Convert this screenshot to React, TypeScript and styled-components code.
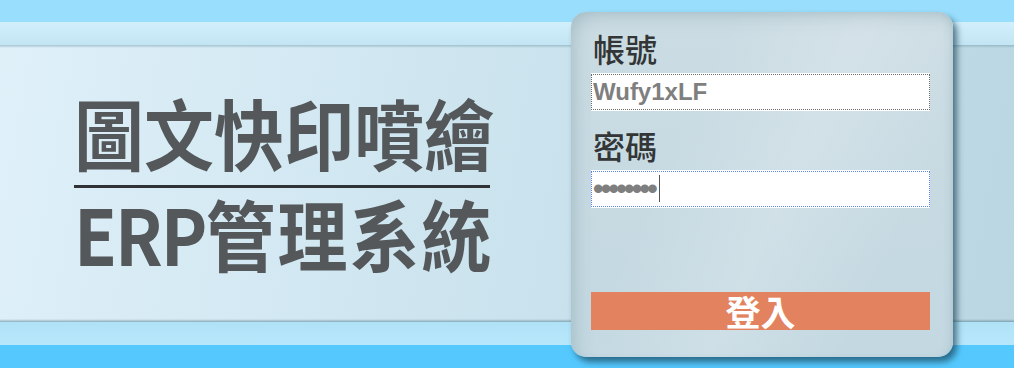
import styled, { createGlobalStyle } from 'styled-components';

const GlobalStyle = createGlobalStyle`
  html, body {
    margin: 0;
    padding: 0;
  }
  body {
    font-family: "Noto Sans CJK TC", "Noto Sans", sans-serif;
  }
`;

// ページ全体。背景の帯はグラデーションで描く
const Page = styled.div`
  width: 1014px;
  height: 368px;
  overflow: hidden;
  display: flex;
  align-items: flex-start;
  padding-top: 12px;
  box-sizing: border-box;
  background:
    linear-gradient(to bottom, rgba(120, 160, 175, 0.55), rgba(120, 160, 175, 0) 3px) 0 45px / 100% 6px no-repeat,
    linear-gradient(to top, rgba(90, 130, 145, 0.6), rgba(90, 130, 145, 0) 3px) 0 316px / 100% 6px no-repeat,
    linear-gradient(100deg, #dff0f9 0%, #cfe6f0 40%, #b9d6e2 100%) 0 45px / 100% 277px no-repeat,
    linear-gradient(
      to bottom,
      #99defc 0,
      #99defc 22px,
      #d2effc 22px,
      #c3e5f3 45px,
      #b0e2f7 322px,
      #b7e7fb 345px,
      #55c9fe 345px,
      #55c9fe 368px
    );
`;

// 左側の大きいタイトル
const TitleBlock = styled.div`
  margin-left: 74px;
  margin-top: 76px;
  width: 416px;
  display: flex;
  flex-direction: column;
  align-items: stretch;
`;

// タイトルは縦にやや伸ばしてある
const TitleLine = styled.div`
  font-family: "Noto Sans CJK TC", sans-serif;
  font-weight: 700;
  font-size: 70px;
  line-height: 88px;
  color: #54585a;
  white-space: nowrap;
  transform: scaleY(1.1);
`;

// 「ERP」だけ少し詰める
const Latin = styled.span`
  letter-spacing: -2px;
`;

const Wide = styled.span`
  letter-spacing: 2px;
`;

const Divider = styled.div`
  height: 3px;
  background: #2f3335;
  margin: 9px 0 1px;
`;

// ログインカード
const Card = styled.form`
  margin-left: 81px;
  width: 382px;
  height: 345px;
  box-sizing: border-box;
  border-radius: 15px;
  padding: 14px 23px 27px 20px;
  display: flex;
  flex-direction: column;
  background:
    linear-gradient(115deg, rgba(255, 255, 255, 0) 30%, rgba(255, 255, 255, 0.18) 55%, rgba(255, 255, 255, 0) 80%),
    linear-gradient(to bottom, #cbdce3, #c3d8e1);
  box-shadow:
    inset 10px 10px 18px -8px rgba(120, 150, 160, 0.45),
    inset -6px 0 10px -6px rgba(120, 150, 160, 0.4),
    4px 5px 6px rgba(20, 60, 80, 0.65);
`;

const Label = styled.label`
  font-family: "Noto Sans CJK TC", sans-serif;
  font-weight: 500;
  font-size: 32px;
  line-height: 44px;
  color: #333536;
  padding-left: 2px;
  margin-bottom: 3px;
`;

const Field = styled.div`
  position: relative;
  height: 38px;
  background: #fff;
  padding: 1px 0;
  box-sizing: border-box;
  margin-bottom: 12px;
  display: flex;
`;

const Input = styled.input<{ $focused?: boolean }>`
  flex: 1;
  min-width: 0;
  margin: 0;
  padding: 0 0 0 1px;
  border: 1px dotted ${(p) => (p.$focused ? '#5f86e6' : '#6a6a6a')};
  outline: none;
  background: #fff;
  font-family: "Liberation Sans", Arial, sans-serif;
  font-weight: 700;
  font-size: ${(p) => (p.$focused ? '30px' : '24px')};
  color: #7f7f7f;
  letter-spacing: ${(p) => (p.$focused ? '-2.75px' : '0')};
`;

// パスワード欄のキャレット
const Caret = styled.span`
  position: absolute;
  left: 68px;
  top: 5px;
  width: 1px;
  height: 27px;
  background: #555;
`;

const LoginButton = styled.button`
  margin-top: auto;
  height: 38px;
  border: none;
  background: #e3825f;
  color: #fff;
  font-family: "Noto Sans CJK TC", sans-serif;
  font-weight: 700;
  font-size: 35px;
  line-height: 38px;
  padding: 0;
  cursor: pointer;
`;

export default function App() {
  return (
    <>
      <GlobalStyle />
      <Page>
        <TitleBlock>
          <TitleLine>圖文快印噴繪</TitleLine>
          <Divider />
          <TitleLine>
            <Latin>ERP</Latin>
            <Wide>管理系統</Wide>
          </TitleLine>
        </TitleBlock>
        <Card onSubmit={(e) => e.preventDefault()}>
          <Label htmlFor="account">帳號</Label>
          <Field>
            <Input id="account" type="text" defaultValue="Wufy1xLF" />
          </Field>
          <Label htmlFor="password">密碼</Label>
          <Field>
            <Input id="password" type="password" defaultValue="12345678" $focused />
            <Caret />
          </Field>
          <LoginButton type="submit">登入</LoginButton>
        </Card>
      </Page>
    </>
  );
}
